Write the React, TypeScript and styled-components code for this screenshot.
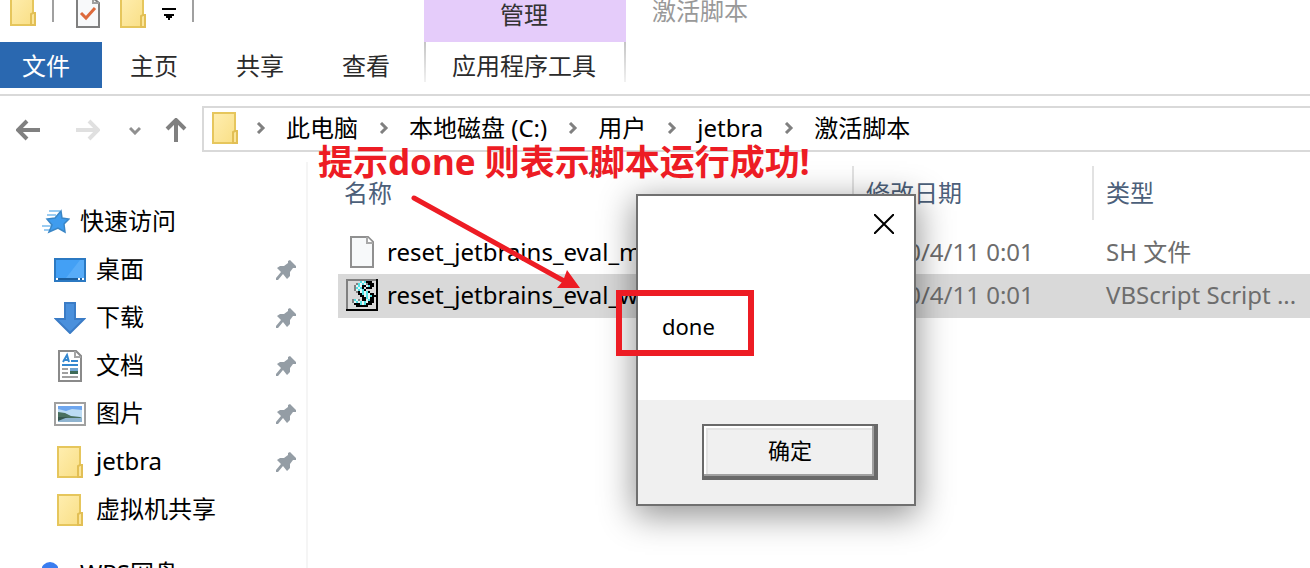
import React from "react";
import styled, { createGlobalStyle, css } from "styled-components";

const GlobalStyle = createGlobalStyle`
  *, *::before, *::after { box-sizing: border-box; }
  body { margin: 0; background: #fff; overflow: hidden; }
  body, button, table {
    font-family: "Noto Sans", "Noto Sans CJK SC", sans-serif;
    font-size: 24px;
    line-height: 32px;
  }
  button { border: 0; margin: 0; padding: 0; background: none; color: inherit; }
  svg { display: block; flex: none; }
`;

const red = "#ed1c24";
const line = "#d9d9d9";

/* ---------- icons ---------- */

const FolderIcon = ({ height = 32 }: { height?: number }) => (
  <svg width="26" height={height} viewBox={`0 ${32 - height} 26 ${height}`} aria-hidden="true">
    <defs>
      <linearGradient id="folder" x1="0" y1="0" x2="1" y2="1">
        <stop offset="0" stopColor="#ffeeb0" />
        <stop offset="1" stopColor="#f9df86" />
      </linearGradient>
    </defs>
    <rect x="1" y="1" width="22" height="30" fill="url(#folder)" stroke="#e6c65c" strokeWidth="2" />
    <path d="M21 31V20l2-1h2v12z" fill="#fbe59a" stroke="#e2bf55" strokeWidth="2" />
  </svg>
);

const CheckedPageIcon = () => (
  <svg width="24" height="28" viewBox="0 0 24 28" aria-hidden="true">
    <path d="M1-2V27H23V3L17-2" fill="#f8f9fa" stroke="#808080" strokeWidth="2" />
    <path d="M17-2V3H23" fill="none" stroke="#a0a0a0" strokeWidth="2" />
    <path d="M5 13L10 18L19 8" fill="none" stroke="#dd6a3c" strokeWidth="3" />
  </svg>
);

const CustomizeIcon = () => (
  <svg width="14" height="12" viewBox="0 0 14 12" aria-hidden="true">
    <path d="M0 0H14V2H0zM2 6H12V8H10V10H8V12H6V10H4V8H2z" fill="#000" />
  </svg>
);

const ArrowIcon = ({ color, turn = 0 }: { color: string; turn?: number }) => (
  <svg width="24" height="24" viewBox="0 0 24 24" aria-hidden="true">
    <path
      d="M24 12H2M11 3L2 12L11 21"
      transform={`rotate(${turn} 12 12)`}
      fill="none"
      stroke={color}
      strokeWidth="4"
    />
  </svg>
);

const ChevronRight = () => (
  <svg width="10" height="12" viewBox="0 0 10 12" aria-hidden="true">
    <path d="M2 1L7 6L2 11" fill="none" stroke="#808080" strokeWidth="3" />
  </svg>
);

const ChevronDown = () => (
  <svg width="12" height="9" viewBox="0 0 12 9" aria-hidden="true">
    <path d="M1 2L6 7L11 2" fill="none" stroke="#909090" strokeWidth="3" />
  </svg>
);

const StarIcon = () => (
  <svg width="28" height="26" viewBox="0 0 28 26" aria-hidden="true">
    <path d="M7 2H18M5 6H14M0 17H9M2 21H8" stroke="#9accf2" strokeWidth="2" />
    <path
      d="M19 2L20 9L27 10L22 15L23 23L16 19L7 23L10 16L5 10L13 9z"
      fill="#3f9cee"
      stroke="#3a86c6"
      strokeWidth="1.5"
    />
  </svg>
);

const DesktopIcon = () => (
  <svg width="32" height="24" viewBox="0 0 32 24" aria-hidden="true">
    <rect x="1" y="1" width="30" height="22" fill="#43a0f5" stroke="#2b79c2" strokeWidth="2" />
    <path d="M12 20L26 2H30V20z" fill="#58acf8" />
    <path d="M2 20H30V22H2z" fill="#1c5f9f" />
    <path d="M2 20H4V22H2zM24 20H26V22H24zM28 20H30V22H28z" fill="#fff" />
  </svg>
);

const DownloadIcon = () => (
  <svg width="32" height="32" viewBox="0 0 32 32" aria-hidden="true">
    <path d="M11 1H21V17H30L16 31L2 17H11z" fill="#4a90dc" stroke="#3b7cc6" strokeWidth="2" />
  </svg>
);

const DocumentIcon = () => (
  <svg width="24" height="32" viewBox="0 0 24 32" aria-hidden="true">
    <path d="M1 1H18L23 6V31H1z" fill="#fff" stroke="#8a8a8a" strokeWidth="2" />
    <path d="M17 1V7H23" fill="none" stroke="#a5a5a5" strokeWidth="2" />
    <path d="M5 12L9 5L11 12M6 10H11" fill="none" stroke="#3487cf" strokeWidth="2" />
    <path d="M13 11H20M4 15H20" stroke="#3487cf" strokeWidth="2" />
    <path d="M4 19H10M4 23H10M4 27H20" stroke="#a0a0a0" strokeWidth="2" />
    <path d="M12 18H20V21H12z" fill="#6fa3cf" />
    <path d="M12 21H20V24H12z" fill="#3e6b58" />
  </svg>
);

const PictureIcon = () => (
  <svg width="32" height="24" viewBox="0 0 32 24" aria-hidden="true">
    <rect x="1" y="1" width="30" height="22" fill="#fff" stroke="#a0a0a0" strokeWidth="2" />
    <path d="M4 4H28V20H4z" fill="#bcdcf5" />
    <path d="M4 4H28V8L18 7L12 9L4 7z" fill="#6ea6ee" />
    <path d="M4 10L11 11L17 14L26 15L28 16H4z" fill="#49705f" />
    <path d="M4 16H28V20H4z" fill="#8fb4d0" />
    <path d="M4 15H14L4 19z" fill="#35564f" />
  </svg>
);

const CloudDotIcon = () => (
  <svg width="16" height="24" viewBox="0 0 16 24" aria-hidden="true">
    <circle cx="8" cy="9" r="9" fill="#3a7df0" />
  </svg>
);

const PinIcon = () => (
  <svg width="20" height="20" viewBox="0 0 20 20" aria-hidden="true">
    <path
      d="M14 0L20 6V8H17L14 12V16L11 19L7 14L2 20H0V18L5 12L1 8L4 6H8L12 3V1z"
      fill="#949da5"
    />
  </svg>
);

const PageIcon = () => (
  <svg width="24" height="32" viewBox="0 0 24 32" aria-hidden="true">
    <path d="M1 1H18L23 6V31H1z" fill="#f7f9fa" stroke="#909090" strokeWidth="2" />
    <path d="M17 1V7H23" fill="#fff" stroke="#a8a8a8" strokeWidth="2" />
  </svg>
);

const scrollPixels = [
  "......cwckkk..",
  "....gcwcwgkkk.",
  "...gwcwkkwckk.",
  "...gcwck.kkk..",
  "...gwcwck.....",
  "....gkwcwck...",
  ".....kkcwcwkk.",
  "......kkwcwckk",
  ".......kkcwkk.",
  "..gcwg.kkwckk.",
  "..gwcwcwcwkkk.",
  "...kkkcwckkk..",
  "....kkkkkk....",
];
const pixelColors: Record<string, string> = { g: "#808080", c: "#4fdfe2", w: "#e6f4f4", k: "#000" };

const ScriptIcon = () => (
  <svg width="32" height="32" viewBox="0 0 16 16" shapeRendering="crispEdges" aria-hidden="true">
    <path d="M0 0H16V16H0z" fill="#000" />
    <path d="M0 0H15V15H0z" fill="#808080" />
    <path d="M1 1H15V15H1z" fill="#d9d9d9" />
    {scrollPixels.flatMap((row, y) =>
      [...row].map((p, x) =>
        p === "." ? null : (
          <rect key={`${x}-${y}`} x={x + 1} y={y + 1} width="1" height="1" fill={pixelColors[p]} />
        ),
      ),
    )}
  </svg>
);

const CloseIcon = () => (
  <svg width="20" height="20" viewBox="0 0 20 20" aria-hidden="true">
    <path d="M0 0L20 20M20 0L0 20" stroke="#000" strokeWidth="2" />
  </svg>
);

/* ---------- window frame ---------- */

const Window = styled.div`
  position: relative;
  display: flex;
  flex-direction: column;
  height: 100vh;
  overflow: hidden;
  color: #000;
`;

const TitleBar = styled.header`
  display: flex;
  height: 42px;
  flex: none;
`;

const QuickAccess = styled.div`
  display: flex;
  align-items: flex-start;
  width: 424px;
  padding-left: 10px;
`;

const Separator = styled.span<{ $before: number; $after: number }>`
  width: 2px;
  height: 22px;
  margin: 0 ${(p) => p.$after}px 0 ${(p) => p.$before}px;
  background: #a0a0a0;
`;

const ToolButton = styled.button<{ $gap?: number; $drop?: number }>`
  margin-right: ${(p) => p.$gap ?? 0}px;
  padding-top: ${(p) => p.$drop ?? 0}px;
`;

const ContextGroup = styled.div`
  width: 202px;
  padding-right: 2px;
  background: #e5ccfa;
  color: #333;
  line-height: 30px;
  text-align: center;
`;

const WindowTitle = styled.div`
  padding-left: 26px;
  color: #999;
  line-height: 22px;
`;

const Ribbon = styled.nav`
  display: flex;
  flex: none;
  height: 54px;
  border-bottom: 2px solid ${line};
  color: #2b2b2b;
`;

const Tab = styled.button<{ $kind?: "file" | "context" }>`
  width: 106px;
  height: 46px;
  padding: 2px 2px 0 0;
  ${(p) =>
    p.$kind === "file" &&
    css`
      width: 102px;
      padding-right: 10px;
      background: #2a68b0;
      color: #fff;
    `}
  ${(p) =>
    p.$kind === "context" &&
    css`
      width: 202px;
      height: 40px;
      padding-top: 8px;
      margin-left: 4px;
      border: solid;
      border-width: 0 2px;
      border-image: linear-gradient(#c4c4c4, #f2f2f2) 1;
    `}
`;

const NavBar = styled.div`
  display: flex;
  align-items: center;
  flex: none;
  height: 66px;
  padding: 2px 0 0 16px;
`;

const NavButton = styled.button<{ $gap: number }>`
  margin-right: ${(p) => p.$gap}px;
`;

const Crumb = styled.span`
  display: flex;
  align-items: center;
  gap: 20px;
  margin-left: 21px;

  &:first-of-type { margin-left: 18px; }
`;

const AddressBar = styled.div`
  display: flex;
  align-items: center;
  flex: 1;
  height: 46px;
  margin-bottom: 2px;
  padding: 0 0 2px 8px;
  border: 2px solid ${line};
  border-right: 0;
  white-space: nowrap;
`;

/* ---------- body ---------- */

const Body = styled.div`
  display: flex;
  flex: 1;
  min-height: 0;
`;

const Sidebar = styled.nav`
  flex: none;
  width: 308px;
  padding-top: 36px;
  border-right: 2px solid #f5f5f5;
`;

const TreeList = styled.ul`
  margin: 0;
  padding: 0;
  list-style: none;
`;

const TreeItem = styled.li<{ $root?: boolean; $spaced?: boolean }>`
  display: flex;
  align-items: center;
  height: 48px;
  margin-top: ${(p) => (p.$spaced ? 16 : 0)}px;
  padding: 0 10px 0 ${(p) => (p.$root ? 42 : 54)}px;
`;

const IconSlot = styled.span<{ $root?: boolean }>`
  display: flex;
  justify-content: ${(p) => (p.$root ? "flex-start" : "center")};
  width: ${(p) => (p.$root ? 38 : 32)}px;
  margin-right: ${(p) => (p.$root ? 0 : 10)}px;
`;

const ItemLabel = styled.span`
  flex: 1;
  padding-bottom: 2px;
`;

const FilePane = styled.main`
  flex: 1;
  min-width: 0;
  padding: 4px 0 0 30px;
`;

const FileTable = styled.table`
  width: 100%;
  table-layout: fixed;
  border-collapse: collapse;
  white-space: nowrap;
`;

const Heading = styled.th<{ $width?: number }>`
  width: ${(p) => (p.$width ? `${p.$width}px` : "auto")};
  height: 54px;
  padding: 0 0 0 12px;
  background: linear-gradient(#e2e2e2, #e2e2e2) right / ${(p) => (p.$width ? 2 : 0)}px 100% no-repeat;
  color: #4c607a;
  font-weight: 400;
  text-align: left;

  &:first-child { padding-left: 6px; }
`;

const HeadSpace = styled.tr`
  height: 12px;
`;

const FileRow = styled.tr<{ $selected?: boolean; $height: number }>`
  height: ${(p) => p.$height}px;
  background: ${(p) => (p.$selected ? "#d9d9d9" : "transparent")};
`;

const Cell = styled.td`
  padding: 0 0 2px 12px;
  overflow: hidden;
  color: #6d6d6d;

  &:first-child { padding-left: 8px; color: #000; }
`;

const FileName = styled.span`
  display: flex;
  align-items: center;
  gap: 9px;
`;

const IconBox = styled.span`
  display: flex;
  justify-content: center;
  width: 32px;
`;

/* ---------- message box ---------- */

const Dialog = styled.section`
  position: absolute;
  top: 194px;
  left: 636px;
  display: flex;
  flex-direction: column;
  width: 280px;
  height: 312px;
  border: 2px solid #707070;
  background: #fff;
  box-shadow: 0 8px 32px 2px rgba(0, 0, 0, 0.42);
  font-size: 22px;
`;

const CloseButton = styled.button`
  align-self: flex-end;
  margin: 18px 20px 0 0;
`;

const Message = styled.p`
  flex: 1;
  margin: 0;
  padding: 76px 0 0 24px;
`;

const DialogFooter = styled.footer`
  display: flex;
  justify-content: flex-end;
  height: 104px;
  padding: 24px 36px 24px 0;
  background: #f0f0f0;
`;

const OkButton = styled.button`
  width: 176px;
  height: 56px;
  padding: 0 0 2px 2px;
  border: solid #696969;
  border-width: 2px 4px 4px 2px;
  box-shadow: inset -2px -2px #a0a0a0, inset 2px 2px #fff, inset 4px 4px #e3e3e3;
  font-size: 22px;
`;

/* ---------- tutorial marks ---------- */

const Caption = styled.p`
  position: absolute;
  top: 144px;
  left: 318px;
  margin: 0;
  color: ${red};
  font-size: 35px;
  font-weight: 700;
  line-height: 36px;
  white-space: nowrap;
`;

const Pointer = styled.svg`
  position: absolute;
  top: 190px;
  left: 408px;
`;

const Highlight = styled.div`
  position: absolute;
  top: 290px;
  left: 616px;
  width: 138px;
  height: 66px;
  border: 6px solid ${red};
`;

const SortMark = styled.svg`
  position: absolute;
  top: 168px;
  left: 588px;
`;

const tabs = ["主页", "共享", "查看"];
const crumbs = ["此电脑", "本地磁盘 (C:)", "用户", "jetbra", "激活脚本"];
const places = [
  { label: "桌面", icon: <DesktopIcon />, pinned: true },
  { label: "下载", icon: <DownloadIcon />, pinned: true },
  { label: "文档", icon: <DocumentIcon />, pinned: true },
  { label: "图片", icon: <PictureIcon />, pinned: true },
  { label: "jetbra", icon: <FolderIcon />, pinned: true },
  { label: "虚拟机共享", icon: <FolderIcon />, pinned: false },
];
const files = [
  { name: "reset_jetbrains_eval_mac_linux.sh", type: "SH 文件", icon: <PageIcon />, height: 42, selected: false },
  { name: "reset_jetbrains_eval_windows.vbs", type: "VBScript Script ...", icon: <ScriptIcon />, height: 44, selected: true },
];

export default function App() {
  return (
    <>
      <GlobalStyle />
      <Window>
        <TitleBar>
          <QuickAccess>
            <FolderIcon height={26} />
            <Separator $before={16} $after={22} />
            <ToolButton aria-label="属性" $gap={20}><CheckedPageIcon /></ToolButton>
            <ToolButton aria-label="新建文件夹" $gap={16}><FolderIcon height={28} /></ToolButton>
            <ToolButton aria-label="自定义" $drop={8}><CustomizeIcon /></ToolButton>
            <Separator $before={16} $after={0} />
          </QuickAccess>
          <ContextGroup>管理</ContextGroup>
          <WindowTitle>激活脚本</WindowTitle>
        </TitleBar>

        <Ribbon>
          <Tab $kind="file">文件</Tab>
          {tabs.map((t) => <Tab key={t}>{t}</Tab>)}
          <Tab $kind="context">应用程序工具</Tab>
        </Ribbon>

        <NavBar>
          <NavButton aria-label="后退" $gap={36}><ArrowIcon color="#808080" /></NavButton>
          <NavButton aria-label="前进" $gap={29}><ArrowIcon color="#e0e0e0" turn={180} /></NavButton>
          <NavButton aria-label="最近" $gap={23}><ChevronDown /></NavButton>
          <NavButton aria-label="向上" $gap={14}><ArrowIcon color="#808080" turn={90} /></NavButton>
          <AddressBar>
            <FolderIcon />
            {crumbs.map((c) => (
              <Crumb key={c}><ChevronRight /><button>{c}</button></Crumb>
            ))}
          </AddressBar>
        </NavBar>

        <Body>
          <Sidebar>
            <TreeList>
              <TreeItem $root><IconSlot $root><StarIcon /></IconSlot><ItemLabel>快速访问</ItemLabel></TreeItem>
              {places.map((p) => (
                <TreeItem key={p.label}>
                  <IconSlot>{p.icon}</IconSlot>
                  <ItemLabel>{p.label}</ItemLabel>
                  {p.pinned && <PinIcon />}
                </TreeItem>
              ))}
              <TreeItem $root $spaced><IconSlot $root><CloudDotIcon /></IconSlot><ItemLabel>WPS网盘</ItemLabel></TreeItem>
            </TreeList>
          </Sidebar>

          <FilePane>
            <FileTable>
              <thead>
                <tr>
                  <Heading $width={516}>名称</Heading>
                  <Heading $width={240}>修改日期</Heading>
                  <Heading>类型</Heading>
                </tr>
              </thead>
              <tbody>
                <HeadSpace />
                {files.map((f) => (
                  <FileRow key={f.name} $height={f.height} $selected={f.selected}>
                    <Cell><FileName><IconBox>{f.icon}</IconBox>{f.name}</FileName></Cell>
                    <Cell>2020/4/11 0:01</Cell>
                    <Cell>{f.type}</Cell>
                  </FileRow>
                ))}
              </tbody>
            </FileTable>
          </FilePane>
        </Body>

        <SortMark width="14" height="7" viewBox="0 0 14 7" aria-hidden="true">
          <path d="M1 6L7 1L13 6" fill="none" stroke="#606060" strokeWidth="2" />
        </SortMark>

        <Dialog role="dialog" aria-label="done">
          <CloseButton aria-label="关闭"><CloseIcon /></CloseButton>
          <Message>done</Message>
          <DialogFooter><OkButton>确定</OkButton></DialogFooter>
        </Dialog>

        <Caption>提示done 则表示脚本运行成功!</Caption>
        <Pointer width="176" height="104" viewBox="0 0 176 104" aria-hidden="true">
          <path d="M6 8L156 91" stroke={red} strokeWidth="5" strokeLinecap="round" />
          <path d="M172 98L149 98L155 91L159 80z" fill={red} />
        </Pointer>
        <Highlight />
      </Window>
    </>
  );
}
